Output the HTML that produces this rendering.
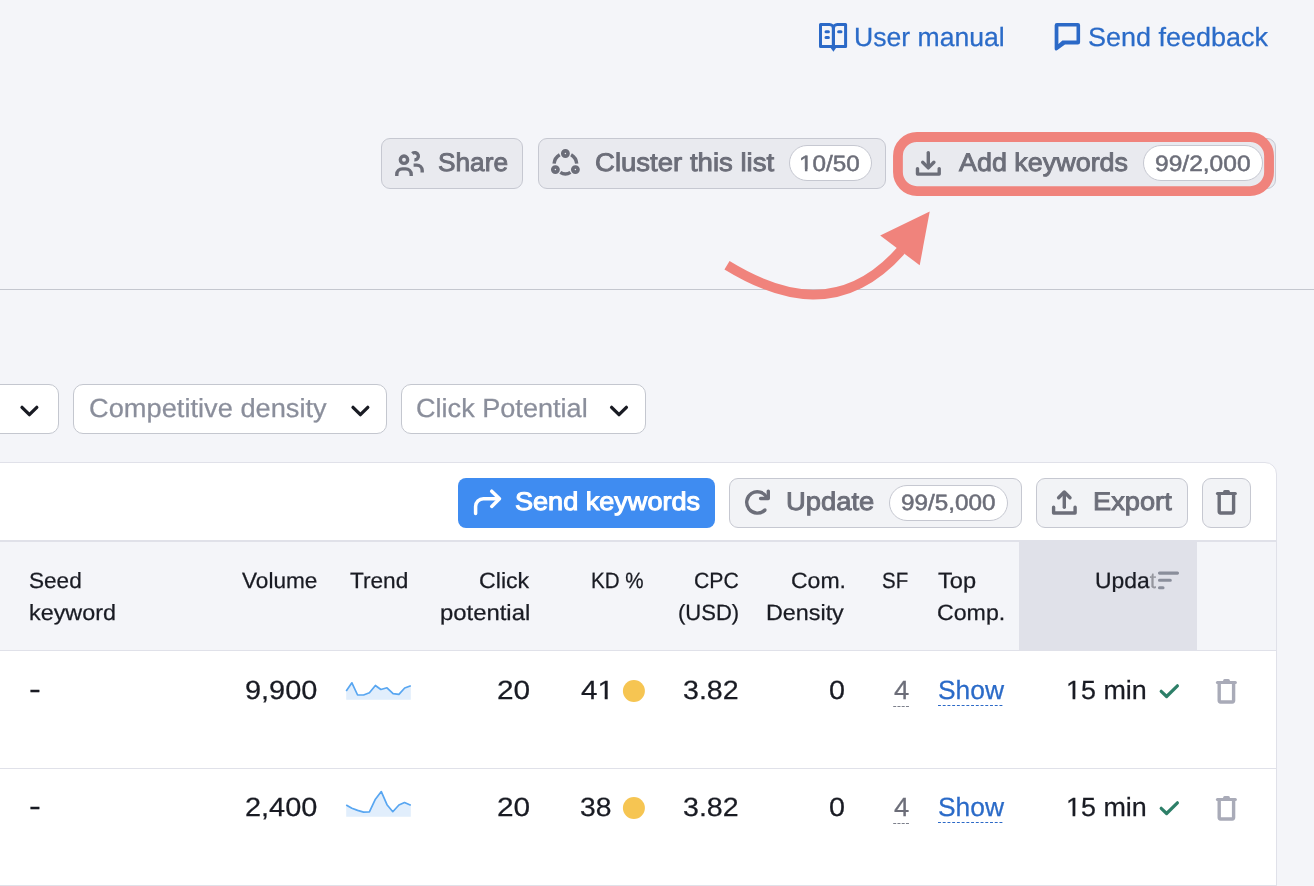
<!DOCTYPE html>
<html><head><meta charset="utf-8"><title>Keyword list</title>
<style>
html,body{margin:0;padding:0;}
#root{position:absolute;left:0;top:0;width:1314px;height:886px;overflow:hidden;background:#f4f5f9;}
body{width:1314px;height:886px;overflow:hidden;position:relative;background:#f4f5f9;font-family:"Liberation Sans",sans-serif;}
.t{transform-origin:0 0;position:absolute;white-space:pre;line-height:1;font-family:"Liberation Sans",sans-serif;text-rendering:geometricPrecision;}
.a{position:absolute;box-sizing:border-box;}
.btn{background:#e9eaef;border:1px solid #c6c8d1;border-radius:9px;}
.dd{background:#fff;border:1px solid #c4c7cf;border-radius:10px;}
.badge{background:#fff;border:1px solid #c6c8d1;border-radius:20px;}
svg{position:absolute;overflow:visible;}
#txt{position:absolute;left:0;top:0;width:1314px;height:886px;will-change:transform;}

.one,.ones{display:inline-block;}.one{clip-path:polygon(0 0,100% 0,100% 75.6%,62% 75.6%,62% 100%,44% 100%,44% 75.6%,0 75.6%);}.ones{clip-path:polygon(0 0,100% 0,100% 71.8%,62% 71.8%,62% 100%,44% 100%,44% 71.8%,0 71.8%);}
</style></head>
<body>
<div id="root">
<!-- separator line -->
<div class="a" style="left:0;top:289px;width:1314px;height:1px;background:#c4c7cf"></div>

<!-- top buttons -->
<div class="a btn" style="left:381px;top:138px;width:142px;height:51px"></div>
<div class="a btn" style="left:538px;top:138px;width:348px;height:51px"></div>
<div class="a badge" style="left:789px;top:145px;width:83px;height:36px"></div>
<div class="a btn" style="left:897px;top:138px;width:379px;height:51px"></div>
<div class="a badge" style="left:1143px;top:145px;width:120px;height:36px"></div>

<!-- filters -->
<div class="a dd" style="left:-40px;top:384px;width:99px;height:50px"></div>
<div class="a dd" style="left:73px;top:384px;width:314px;height:50px"></div>
<div class="a dd" style="left:401px;top:384px;width:245px;height:50px"></div>

<!-- table card -->
<div class="a" style="left:-20px;top:462px;width:1297px;height:460px;background:#fff;border:1px solid #e0e1e9;border-radius:0 12px 0 0"></div>
<!-- toolbar buttons -->
<div class="a" style="left:458px;top:478px;width:257px;height:50px;background:#3f8cf1;border-radius:8px"></div>
<div class="a btn" style="left:729px;top:478px;width:293px;height:50px;background:#f2f3f6"></div>
<div class="a badge" style="left:889px;top:485px;width:119px;height:36px"></div>
<div class="a btn" style="left:1036px;top:478px;width:152px;height:50px;background:#f2f3f6"></div>
<div class="a btn" style="left:1202px;top:478px;width:49px;height:50px;background:#f2f3f6"></div>

<!-- header -->
<div class="a" style="left:0;top:540px;width:1276px;height:111px;background:#f4f5f9;border-top:2px solid #e0e1e9;border-bottom:1px solid #e0e1e9"></div>
<div class="a" style="left:1019px;top:542px;width:178px;height:109px;background:#e0e1e9"></div>
<!-- row divider -->
<div class="a" style="left:0;top:768px;width:1276px;height:1px;background:#e0e1e9"></div>
<div class="a" style="left:0;top:885px;width:1276px;height:1px;background:#e0e1e9"></div>
<svg class="a" style="left:0;top:0" width="1314" height="886" viewBox="0 0 1314 886">
<g fill="none" stroke="#2b69c7" stroke-width="3" stroke-linejoin="round">
<path d="M820.5 24.5 H829.5 a3.9 3.9 0 0 1 3.9 3.9 V46.5 H820.5 Z"/>
<path d="M845.6 24.5 H837.3 a3.9 3.9 0 0 0 -3.9 3.9 V46.5 H845.6 Z"/>
</g>
<path d="M830.4 47.5 H836.4 L833.4 51.8 Z" fill="#2b69c7"/>
<g stroke="#2b69c7" stroke-width="3" stroke-linecap="round"><path d="M826 31.8 H828.4 M826 37.4 H828.4 M838.6 31.8 H841"/></g>
<path fill-rule="evenodd" d="M1054.65 25.2 Q1054.65 23 1056.85 23 H1077.9 Q1080.1 23 1080.1 25.2 V42.3 Q1080.1 44.5 1077.9 44.5 H1065 L1057.4 49.9 Q1054.65 51.6 1054.65 48.6 Z M1058.4 26.4 H1076.5 V40.5 H1062.4 L1058.4 44.1 Z" fill="#2b69c7"/>
<g fill="none" stroke="#6c6e79" stroke-width="3.4">
<circle cx="404" cy="159.7" r="3.65"/>
<path d="M396.8 175.9 V174.4 a5.5 5.5 0 0 1 5.5 -5.5 h3.4 a5.5 5.5 0 0 1 5.5 5.5 V175.9"/>
<path d="M412.3 153.6 A3.6 3.6 0 1 1 414.4 159.8"/>
<path d="M413.6 165.1 h3.2 a5.4 5.4 0 0 1 5.4 5.4 V172.6"/>
</g>
<g fill="none" stroke="#6c6e79" stroke-width="3.4"><path d="M571.07 154.82 A11.35 11.35 0 0 1 576.71 163.72"/><path d="M560.3 172.3 Q565.4 175.7 570.5 172.3"/><path d="M554.09 163.72 A11.35 11.35 0 0 1 559.73 154.82"/><circle cx="565.4" cy="153.5" r="2.6" stroke-width="3.7"/><circle cx="555.4" cy="169.6" r="2.6" stroke-width="3.7"/><circle cx="575.4" cy="169.6" r="2.6" stroke-width="3.7"/></g>
<g fill="none" stroke="#6c6e79" stroke-width="3.4" stroke-linecap="round" stroke-linejoin="round">
<path d="M928.3 152.6 V167"/><path d="M922.7 162.3 L928.3 167.9 L933.9 162.3"/>
<path d="M917.5 168.6 V174.1 H939.2 V168.6"/></g>
<rect x="897.95" y="137" width="371.1" height="54.1" rx="19" fill="none" stroke="#f0837c" stroke-width="9.8"/>
<path d="M727 265.3 C780.9 298.3 843.6 315.3 901 250.6" fill="none" stroke="#f0837c" stroke-width="9.8"/>
<path d="M929.7 211.4 L880.2 235.5 L919.7 265.3 Z" fill="#f0837c"/>
<path d="M22.0 407.3 L29.4 414.7 L36.8 407.3" fill="none" stroke="#191b23" stroke-width="3.3" stroke-linecap="round" stroke-linejoin="round"/>
<path d="M353.0 407.3 L360.4 414.7 L367.8 407.3" fill="none" stroke="#191b23" stroke-width="3.3" stroke-linecap="round" stroke-linejoin="round"/>
<path d="M611.6 407.3 L619.0 414.7 L626.4 407.3" fill="none" stroke="#191b23" stroke-width="3.3" stroke-linecap="round" stroke-linejoin="round"/>
<g fill="none" stroke="#fff" stroke-width="3.5" stroke-linecap="round" stroke-linejoin="round">
<path d="M475.6 513.4 V506.6 a7.8 7.8 0 0 1 7.8 -7.8 H498.5"/><path d="M491.7 491.2 L499.5 498.8 L491.7 506.4"/></g>
<g fill="none" stroke="#6c6e79" stroke-width="3.4" stroke-linecap="round" stroke-linejoin="round">
<path d="M764.97 509.97 A10.7 10.7 0 1 1 766.93 497.54" stroke-linecap="butt"/><circle cx="764.97" cy="509.97" r="1.7" fill="#6c6e79" stroke="none"/>
<path d="M768.3 491.1 V498.5 H760.6"/></g>
<g fill="none" stroke="#6c6e79" stroke-width="3.4" stroke-linecap="round" stroke-linejoin="round">
<path d="M1064.3 507.2 V493.5"/><path d="M1058.6 497.8 L1064.3 492 L1070 497.8"/>
<path d="M1053.6 507.3 V513 H1075.1 V507.3"/></g>
<g transform="translate(0,0)" fill="none" stroke="#6c6e79">
<path d="M1219.2 494.5 V511.6 a1.4 1.4 0 0 0 1.4 1.4 H1232.2 a1.4 1.4 0 0 0 1.4 -1.4 V494.5" stroke-width="3.4"/>
<path d="M1217.4 493.4 H1235.4" stroke-width="3" stroke-linecap="round"/>
<path d="M1224.6 491.4 H1228.4" stroke-width="3" stroke-linecap="round"/>
</g>
<g transform="translate(0,189)" fill="none" stroke="#a9abb8">
<path d="M1219.2 494.5 V511.6 a1.4 1.4 0 0 0 1.4 1.4 H1232.2 a1.4 1.4 0 0 0 1.4 -1.4 V494.5" stroke-width="3.4"/>
<path d="M1217.4 493.4 H1235.4" stroke-width="3" stroke-linecap="round"/>
<path d="M1224.6 491.4 H1228.4" stroke-width="3" stroke-linecap="round"/>
</g>
<g transform="translate(0,306)" fill="none" stroke="#a9abb8">
<path d="M1219.2 494.5 V511.6 a1.4 1.4 0 0 0 1.4 1.4 H1232.2 a1.4 1.4 0 0 0 1.4 -1.4 V494.5" stroke-width="3.4"/>
<path d="M1217.4 493.4 H1235.4" stroke-width="3" stroke-linecap="round"/>
<path d="M1224.6 491.4 H1228.4" stroke-width="3" stroke-linecap="round"/>
</g>
<g stroke="#8a8e9b" stroke-width="3.1" stroke-linecap="round"><path d="M1159.5 573.1 H1177.5 M1159.5 580.3 H1170.3 M1159.5 587.7 H1163"/></g>
<path d="M1161.2 691.3 L1166.6 696.5 L1177.4 685.8" fill="none" stroke="#2d7f68" stroke-width="3.2" stroke-linecap="round" stroke-linejoin="round"/>
<path d="M1161.2 808.3 L1166.6 813.5 L1177.4 802.8" fill="none" stroke="#2d7f68" stroke-width="3.2" stroke-linecap="round" stroke-linejoin="round"/>
<circle cx="633.9" cy="691" r="11" fill="#f6c552"/>
<circle cx="633.9" cy="808" r="11" fill="#f6c552"/>
<path d="M346.2 691.0 L351.9 682.8 L357.6 695.0 L363.6 695.0 L369.4 692.8 L375.4 685.5 L380.9 689.5 L387.0 687.8 L393.1 693.7 L398.9 694.4 L404.7 688.0 L410.8 685.8 L410.8 699.8 L346.2 699.8 Z" fill="#e1eefc"/><path d="M346.2 691.0 L351.9 682.8 L357.6 695.0 L363.6 695.0 L369.4 692.8 L375.4 685.5 L380.9 689.5 L387.0 687.8 L393.1 693.7 L398.9 694.4 L404.7 688.0 L410.8 685.8" fill="none" stroke="#58a6f1" stroke-width="1.7" stroke-linejoin="round"/>
<path d="M346.2 805.0 L351.9 808.3 L357.6 810.4 L363.6 812.1 L369.4 811.8 L375.4 799.2 L381.3 791.6 L387.0 804.7 L392.8 811.7 L398.9 805.0 L404.5 802.5 L410.8 805.3 L410.8 816.8 L346.2 816.8 Z" fill="#e1eefc"/><path d="M346.2 805.0 L351.9 808.3 L357.6 810.4 L363.6 812.1 L369.4 811.8 L375.4 799.2 L381.3 791.6 L387.0 804.7 L392.8 811.7 L398.9 805.0 L404.5 802.5 L410.8 805.3" fill="none" stroke="#58a6f1" stroke-width="1.7" stroke-linejoin="round"/>
<path d="M893.2 706.4 H909" stroke="#7d808c" stroke-width="1.05" stroke-dasharray="3 1.25"/>
<path d="M938 705.4 H1004.2" stroke="#2b69c7" stroke-width="1.05" stroke-dasharray="2.9 1.83"/>
<path d="M893.2 823.4 H909" stroke="#7d808c" stroke-width="1.05" stroke-dasharray="3 1.25"/>
<path d="M938 822.4 H1004.2" stroke="#2b69c7" stroke-width="1.05" stroke-dasharray="2.9 1.83"/>
</svg>
<div id="txt">
<span class="t" style="left:853.58px;top:24px;font-size:26.3px;color:#2b6bc8;transform:scaleX(1.0106);-webkit-text-stroke:0.25px #2b6bc8;">User manual</span>
<span class="t" style="left:1088.13px;top:24px;font-size:26.3px;color:#2b6bc8;transform:scaleX(1.0265);-webkit-text-stroke:0.25px #2b6bc8;">Send feedback</span>
<span class="t" style="left:438.18px;top:151px;font-size:25.5px;color:#6c6e79;transform:scaleX(1.0294);-webkit-text-stroke:0.9px #6c6e79;">Share</span>
<span class="t" style="left:594.57px;top:151px;font-size:25.5px;color:#6c6e79;transform:scaleX(1.0803);-webkit-text-stroke:0.9px #6c6e79;">Cluster this list</span>
<span class="t" style="left:799.45px;top:153px;font-size:22.2px;color:#6c6e79;transform:scaleX(1.0936);-webkit-text-stroke:0.5px #6c6e79;"><span class="ones">1</span>0/50</span>
<span class="t" style="left:958.60px;top:151px;font-size:25.5px;color:#6c6e79;transform:scaleX(1.0553);-webkit-text-stroke:0.9px #6c6e79;">Add keywords</span>
<span class="t" style="left:1155.08px;top:153px;font-size:22.2px;color:#6c6e79;transform:scaleX(1.1066);-webkit-text-stroke:0.5px #6c6e79;">99/2,000</span>
<span class="t" style="left:88.74px;top:395px;font-size:26.2px;color:#8a8e9b;transform:scaleX(1.0402);-webkit-text-stroke:0.25px #8a8e9b;">Competitive density</span>
<span class="t" style="left:415.65px;top:395px;font-size:26.2px;color:#8a8e9b;transform:scaleX(1.0347);-webkit-text-stroke:0.25px #8a8e9b;">Click Potential</span>
<span class="t" style="left:514.91px;top:490px;font-size:25.5px;color:#ffffff;transform:scaleX(1.0614);-webkit-text-stroke:1.05px #ffffff;">Send keywords</span>
<span class="t" style="left:786.24px;top:490px;font-size:25.5px;color:#6c6e79;transform:scaleX(1.0728);-webkit-text-stroke:0.9px #6c6e79;">Update</span>
<span class="t" style="left:901.09px;top:492px;font-size:22.2px;color:#6c6e79;transform:scaleX(1.0948);-webkit-text-stroke:0.5px #6c6e79;">99/5,000</span>
<span class="t" style="left:1092.99px;top:490px;font-size:25.5px;color:#6c6e79;transform:scaleX(1.0680);-webkit-text-stroke:0.9px #6c6e79;">Export</span>
<span class="t" style="left:28.81px;top:570px;font-size:22px;color:#191b23;transform:scaleX(1.0261);-webkit-text-stroke:0.25px #191b23;">Seed</span>
<span class="t" style="left:28.67px;top:602px;font-size:22px;color:#191b23;transform:scaleX(1.0618);-webkit-text-stroke:0.25px #191b23;">keyword</span>
<span class="t" style="left:241.78px;top:570px;font-size:22px;color:#191b23;transform:scaleX(1.0275);-webkit-text-stroke:0.25px #191b23;">Volume</span>
<span class="t" style="left:349.67px;top:570px;font-size:22px;color:#191b23;transform:scaleX(1.0291);-webkit-text-stroke:0.25px #191b23;">Trend</span>
<span class="t" style="left:478.90px;top:570px;font-size:22px;color:#191b23;transform:scaleX(1.0533);-webkit-text-stroke:0.25px #191b23;">Click</span>
<span class="t" style="left:439.60px;top:602px;font-size:22px;color:#191b23;transform:scaleX(1.0850);-webkit-text-stroke:0.25px #191b23;">potential</span>
<span class="t" style="left:591.23px;top:570px;font-size:22px;color:#191b23;transform:scaleX(0.9370);-webkit-text-stroke:0.25px #191b23;">KD %</span>
<span class="t" style="left:693.50px;top:570px;font-size:22px;color:#191b23;transform:scaleX(0.9649);-webkit-text-stroke:0.25px #191b23;">CPC</span>
<span class="t" style="left:677.57px;top:602px;font-size:22px;color:#191b23;transform:scaleX(0.9999);-webkit-text-stroke:0.25px #191b23;">(USD)</span>
<span class="t" style="left:790.91px;top:570px;font-size:22px;color:#191b23;transform:scaleX(1.0456);-webkit-text-stroke:0.25px #191b23;">Com.</span>
<span class="t" style="left:766.34px;top:602px;font-size:22px;color:#191b23;transform:scaleX(1.0603);-webkit-text-stroke:0.25px #191b23;">Density</span>
<span class="t" style="left:882.42px;top:570px;font-size:22px;color:#191b23;transform:scaleX(0.9290);-webkit-text-stroke:0.25px #191b23;">SF</span>
<span class="t" style="left:938.16px;top:570px;font-size:22px;color:#191b23;transform:scaleX(1.0731);-webkit-text-stroke:0.25px #191b23;">Top</span>
<span class="t" style="left:937.40px;top:602px;font-size:22px;color:#191b23;transform:scaleX(1.0528);-webkit-text-stroke:0.25px #191b23;">Comp.</span>
<span class="t" style="left:1094.76px;top:570px;font-size:22px;color:#191b23;transform:scaleX(1.0407);-webkit-text-stroke:0.25px #191b23;-webkit-mask-image:linear-gradient(90deg,#000 0,#000 86%,rgba(0,0,0,.38) 91%,rgba(0,0,0,.38) 100%);mask-image:linear-gradient(90deg,#000 0,#000 86%,rgba(0,0,0,.38) 91%,rgba(0,0,0,.38) 100%);">Updat</span>
<span class="t" style="left:28.58px;top:676px;font-size:26.3px;color:#191b23;transform:scaleX(1.3425);-webkit-text-stroke:0.25px #191b23;">-</span>
<span class="t" style="left:245.04px;top:677px;font-size:26.3px;color:#191b23;transform:scaleX(1.0992);-webkit-text-stroke:0.25px #191b23;">9,900</span>
<span class="t" style="left:496.67px;top:677px;font-size:26.3px;color:#191b23;transform:scaleX(1.1340);-webkit-text-stroke:0.25px #191b23;">20</span>
<span class="t" style="left:580.60px;top:677px;font-size:26.3px;color:#191b23;transform:scaleX(1.1245);-webkit-text-stroke:0.25px #191b23;">4<span class="one">1</span></span>
<span class="t" style="left:682.69px;top:677px;font-size:26.3px;color:#191b23;transform:scaleX(1.0870);-webkit-text-stroke:0.25px #191b23;">3.82</span>
<span class="t" style="left:829.01px;top:677px;font-size:26.3px;color:#191b23;transform:scaleX(1.0929);-webkit-text-stroke:0.25px #191b23;">0</span>
<span class="t" style="left:893.83px;top:677px;font-size:26.3px;color:#6c6e79;transform:scaleX(1.0410);-webkit-text-stroke:0.25px #6c6e79;">4</span>
<span class="t" style="left:937.86px;top:677px;font-size:26.3px;color:#2b6bc8;transform:scaleX(1.0037);-webkit-text-stroke:0.25px #2b6bc8;">Show</span>
<span class="t" style="left:1065.81px;top:677px;font-size:26.3px;color:#191b23;transform:scaleX(1.0228);-webkit-text-stroke:0.25px #191b23;"><span class="one">1</span>5 min</span>
<span class="t" style="left:28.58px;top:793px;font-size:26.3px;color:#191b23;transform:scaleX(1.3425);-webkit-text-stroke:0.25px #191b23;">-</span>
<span class="t" style="left:245.01px;top:794px;font-size:26.3px;color:#191b23;transform:scaleX(1.0997);-webkit-text-stroke:0.25px #191b23;">2,400</span>
<span class="t" style="left:496.67px;top:794px;font-size:26.3px;color:#191b23;transform:scaleX(1.1340);-webkit-text-stroke:0.25px #191b23;">20</span>
<span class="t" style="left:580.41px;top:794px;font-size:26.3px;color:#191b23;transform:scaleX(1.0738);-webkit-text-stroke:0.25px #191b23;">38</span>
<span class="t" style="left:682.69px;top:794px;font-size:26.3px;color:#191b23;transform:scaleX(1.0870);-webkit-text-stroke:0.25px #191b23;">3.82</span>
<span class="t" style="left:829.01px;top:794px;font-size:26.3px;color:#191b23;transform:scaleX(1.0929);-webkit-text-stroke:0.25px #191b23;">0</span>
<span class="t" style="left:893.83px;top:794px;font-size:26.3px;color:#6c6e79;transform:scaleX(1.0410);-webkit-text-stroke:0.25px #6c6e79;">4</span>
<span class="t" style="left:937.86px;top:794px;font-size:26.3px;color:#2b6bc8;transform:scaleX(1.0037);-webkit-text-stroke:0.25px #2b6bc8;">Show</span>
<span class="t" style="left:1065.81px;top:794px;font-size:26.3px;color:#191b23;transform:scaleX(1.0228);-webkit-text-stroke:0.25px #191b23;"><span class="one">1</span>5 min</span>
</div>
</div>
</body></html>
